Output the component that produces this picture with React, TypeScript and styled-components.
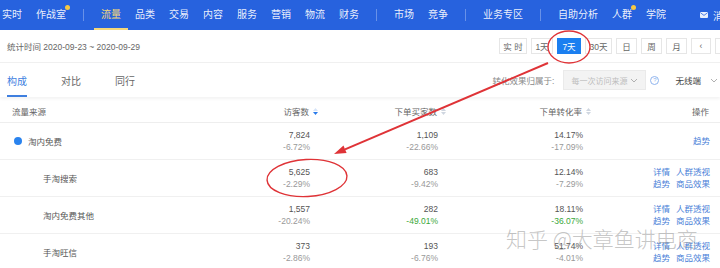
import React from "react";
import styled, { createGlobalStyle, css } from "styled-components";

const GlobalStyle = createGlobalStyle`
  html, body { margin: 0; padding: 0; background: #fff; }
  body { font-family: "Liberation Sans", "Noto Sans CJK SC", sans-serif; }
  * { box-sizing: border-box; }
`;

const Page = styled.div`
  position: relative;
  width: 720px;
  height: 268px;
  overflow: hidden;
  background: #fff;
`;

/* ---------- nav ---------- */
const NavBar = styled.div`
  height: 30px;
  background: #2762de;
  display: flex;
  align-items: center;
  gap: 14px;
  padding-left: 2px;
  white-space: nowrap;
`;

const NavItem = styled.div<{ $active?: boolean; $dot?: boolean }>`
  position: relative;
  font-size: 10px;
  line-height: 30px;
  height: 30px;
  color: rgba(255, 255, 255, 0.92);
  flex-shrink: 0;
  ${(p) =>
    p.$active &&
    css`
      color: #f4d77a;
      &::after {
        content: "";
        position: absolute;
        left: -7px;
        right: -7px;
        bottom: 0;
        height: 2px;
        background: #f4d77a;
      }
    `}
  ${(p) =>
    p.$dot &&
    css`
      &::before {
        content: "";
        position: absolute;
        right: -4px;
        top: 5px;
        width: 5px;
        height: 5px;
        border-radius: 50%;
        background: #f6c843;
      }
    `}
`;

const NavSep = styled.div`
  width: 1px;
  height: 12px;
  margin: 0 3px;
  background: rgba(255, 255, 255, 0.3);
  flex-shrink: 0;
`;

const NavMsg = styled.div`
  display: flex;
  align-items: center;
  gap: 5px;
  margin-left: 20px;
  font-size: 10px;
  color: rgba(255, 255, 255, 0.92);
  flex-shrink: 0;
`;

/* ---------- toolbar ---------- */
const Toolbar = styled.div`
  height: 33px;
  padding: 0 0 0 7px;
  display: flex;
  align-items: center;
  justify-content: space-between;
  border-bottom: 1px solid #f0f0f0;
`;

const StatText = styled.div`
  font-size: 8.5px;
  color: #666;
  white-space: nowrap;
`;

const BtnGroup = styled.div`
  display: flex;
  gap: 4px;
  margin-right: -15px;
`;

const RangeBtn = styled.div<{ $active?: boolean; $w: number }>`
  width: ${(p) => p.$w}px;
  height: 16px;
  display: flex;
  align-items: center;
  justify-content: center;
  font-size: 8.5px;
  border: 1px solid ${(p) => (p.$active ? "#1b7ff0" : "#e6e6e6")};
  background: ${(p) => (p.$active ? "#1b7ff0" : "#fff")};
  color: ${(p) => (p.$active ? "#fff" : "#666")};
  white-space: nowrap;
`;

/* ---------- tabs ---------- */
const TabsBar = styled.div`
  height: 34px;
  padding: 0 2px 0 7px;
  display: flex;
  align-items: stretch;
  justify-content: space-between;
  box-shadow: 0 2px 3px rgba(0, 0, 0, 0.05);
  position: relative;
`;

const Tabs = styled.div`
  display: flex;
  gap: 34px;
`;

const Tab = styled.div<{ $active?: boolean }>`
  position: relative;
  display: flex;
  align-items: center;
  font-size: 10px;
  padding-top: 1px;
  color: ${(p) => (p.$active ? "#3f7fdf" : "#666")};
  ${(p) =>
    p.$active &&
    css`
      &::after {
        content: "";
        position: absolute;
        left: 0;
        right: 0;
        bottom: 0;
        height: 2px;
        background: #3f7fdf;
      }
    `}
`;

const Filters = styled.div`
  display: flex;
  align-items: center;
`;

const FilterLabel = styled.div`
  font-size: 8.5px;
  color: #888;
  margin-right: 9px;
`;

const SelectBox = styled.div`
  width: 83px;
  height: 20px;
  background: #f3f3f3;
  border: 1px solid #eaeaea;
  display: flex;
  align-items: center;
  justify-content: space-between;
  padding: 0 7px 0 7px;
  font-size: 8px;
  color: #bdbdbd;
`;

const Help = styled.div`
  width: 9px;
  height: 9px;
  border-radius: 50%;
  border: 1px solid #8fb4ee;
  color: #8fb4ee;
  font-size: 6px;
  line-height: 7px;
  text-align: center;
  margin-left: 4px;
`;

const Platform = styled.div`
  display: flex;
  align-items: center;
  gap: 9px;
  margin-left: 16px;
  font-size: 8.5px;
  color: #444;
`;

/* ---------- table ---------- */
const Grid = css`
  display: grid;
  grid-template-columns: 238px 60px 128px 145px 127px;
  padding-left: 12px;
`;

const HeadRow = styled.div`
  ${Grid};
  height: 26px;
  padding-top: 3px;
  align-items: center;
  border-bottom: 1px solid #eeeeee;
  font-size: 8.5px;
  color: #666;
`;

const HeadCell = styled.div<{ $right?: boolean }>`
  display: flex;
  align-items: center;
  justify-content: ${(p) => (p.$right ? "flex-end" : "flex-start")};
  white-space: nowrap;
  padding-right: ${(p) => (p.$right ? "1px" : "0")};
`;

const Sorter = styled.span`
  display: inline-flex;
  flex-direction: column;
  margin-left: 4px;
  margin-right: -9px;
  gap: 1px;
`;

const Row = styled.div`
  ${Grid};
  height: 37px;
  align-items: center;
  border-bottom: 1px solid #f0f0f0;
  font-size: 8.5px;
`;

const SourceCell = styled.div<{ $level: number }>`
  display: flex;
  align-items: center;
  gap: 6px;
  padding-left: ${(p) => (p.$level === 1 ? "2px" : "31px")};
  color: #555;
`;

const Dot = styled.span`
  width: 8px;
  height: 8px;
  border-radius: 50%;
  background: #2a83ee;
`;

const NumCell = styled.div`
  display: flex;
  flex-direction: column;
  align-items: flex-end;
  line-height: 12px;
`;

const Main = styled.span`
  color: #555;
`;

const Sub = styled.span<{ $green?: boolean }>`
  color: ${(p) => (p.$green ? "#3aa83a" : "#999")};
`;

const Ops = styled.div`
  display: grid;
  grid-template-columns: auto auto;
  column-gap: 6px;
  row-gap: 0;
  justify-content: end;
  line-height: 12px;
  color: #4a7fd8;
  text-align: left;
`;

const Watermark = styled.div`
  position: absolute;
  left: 506px;
  top: 223px;
  font-size: 21px;
  font-family: "Noto Sans CJK SC", sans-serif;
  font-weight: 300;
  color: rgba(150, 150, 150, 0.55);
  white-space: nowrap;
  letter-spacing: 0;
  pointer-events: none;
`;

const Overlay = styled.svg`
  position: absolute;
  left: 0;
  top: 0;
  pointer-events: none;
`;

const Chevron = () => (
  <svg width="8" height="5" viewBox="0 0 8 5">
    <path d="M1 1 L4 4 L7 1" fill="none" stroke="#b0b0b0" strokeWidth="1" />
  </svg>
);

const SortIcon = ({ active }: { active?: boolean }) => (
  <Sorter>
    <svg width="5" height="3" viewBox="0 0 5 3">
      <path d="M0 3 L2.5 0 L5 3 Z" fill={active ? "#d6e4f8" : "#cfd6e0"} />
    </svg>
    <svg width="5" height="3" viewBox="0 0 5 3">
      <path d="M0 0 L2.5 3 L5 0 Z" fill={active ? "#2a7bea" : "#cfd6e0"} />
    </svg>
  </Sorter>
);

type RowData = {
  name: string;
  level: number;
  v: [string, string];
  b: [string, string, boolean?];
  r: [string, string, boolean?];
  full: boolean;
};

const rows: RowData[] = [
  { name: "淘内免费", level: 1, v: ["7,824", "-6.72%"], b: ["1,109", "-22.66%"], r: ["14.17%", "-17.09%"], full: false },
  { name: "手淘搜索", level: 2, v: ["5,625", "-2.29%"], b: ["683", "-9.42%"], r: ["12.14%", "-7.29%"], full: true },
  { name: "淘内免费其他", level: 2, v: ["1,557", "-20.24%"], b: ["282", "-49.01%", true], r: ["18.11%", "-36.07%", true], full: true },
  { name: "手淘旺信", level: 2, v: ["373", "-2.86%"], b: ["193", "-6.76%"], r: ["51.74%", "-4.01%"], full: true },
];

const ranges: [string, number][] = [
  ["实 时", 28],
  ["1天", 22],
  ["7天", 24],
  ["30天", 27],
  ["日", 21],
  ["周", 21],
  ["月", 21],
  ["‹", 20],
  ["›", 20],
];

export default function App() {
  return (
    <>
      <GlobalStyle />
      <Page>
        <NavBar>
          <NavItem>实时</NavItem>
          <NavItem $dot>作战室</NavItem>
          <NavSep />
          <NavItem $active>流量</NavItem>
          <NavItem>品类</NavItem>
          <NavItem>交易</NavItem>
          <NavItem>内容</NavItem>
          <NavItem>服务</NavItem>
          <NavItem>营销</NavItem>
          <NavItem>物流</NavItem>
          <NavItem>财务</NavItem>
          <NavSep />
          <NavItem>市场</NavItem>
          <NavItem>竞争</NavItem>
          <NavSep />
          <NavItem>业务专区</NavItem>
          <NavSep />
          <NavItem>自助分析</NavItem>
          <NavItem $dot>人群</NavItem>
          <NavItem>学院</NavItem>
          <NavMsg>
            <svg width="8" height="6" viewBox="0 0 8 6">
              <rect x="0" y="0" width="8" height="6" rx="1" fill="rgba(255,255,255,0.9)" />
              <path d="M0.5 0.8 L4 3.4 L7.5 0.8" fill="none" stroke="#2762de" strokeWidth="0.8" />
            </svg>
            消息
          </NavMsg>
        </NavBar>

        <Toolbar>
          <StatText>统计时间 2020-09-23 ~ 2020-09-29</StatText>
          <BtnGroup>
            {ranges.map(([t, w]) => (
              <RangeBtn key={t} $w={w} $active={t === "7天"}>
                {t}
              </RangeBtn>
            ))}
          </BtnGroup>
        </Toolbar>

        <TabsBar>
          <Tabs>
            <Tab $active>构成</Tab>
            <Tab>对比</Tab>
            <Tab>同行</Tab>
          </Tabs>
          <Filters>
            <FilterLabel>转化效果归属于:</FilterLabel>
            <SelectBox>
              <span>每一次访问来源</span>
              <Chevron />
            </SelectBox>
            <Help>?</Help>
            <Platform>
              <span>无线端</span>
              <Chevron />
            </Platform>
          </Filters>
        </TabsBar>

        <HeadRow>
          <HeadCell>流量来源</HeadCell>
          <HeadCell $right>
            访客数
            <SortIcon active />
          </HeadCell>
          <HeadCell $right>
            下单买家数
            <SortIcon />
          </HeadCell>
          <HeadCell $right>
            下单转化率
            <SortIcon />
          </HeadCell>
          <HeadCell $right>操作</HeadCell>
        </HeadRow>

        {rows.map((r) => (
          <Row key={r.name}>
            <SourceCell $level={r.level}>
              {r.level === 1 && <Dot />}
              <span>{r.name}</span>
            </SourceCell>
            <NumCell>
              <Main>{r.v[0]}</Main>
              <Sub>{r.v[1]}</Sub>
            </NumCell>
            <NumCell>
              <Main>{r.b[0]}</Main>
              <Sub $green={r.b[2]}>{r.b[1]}</Sub>
            </NumCell>
            <NumCell>
              <Main>{r.r[0]}</Main>
              <Sub $green={r.r[2]}>{r.r[1]}</Sub>
            </NumCell>
            {r.full ? (
              <Ops>
                <span>详情</span>
                <span>人群透视</span>
                <span>趋势</span>
                <span>商品效果</span>
              </Ops>
            ) : (
              <Ops>
                <span />
                <span>趋势</span>
              </Ops>
            )}
          </Row>
        ))}

        <Watermark>知乎 @大章鱼讲电商</Watermark>

        <Overlay width="720" height="268" viewBox="0 0 720 268">
          <ellipse cx="569" cy="47" rx="21" ry="16" fill="none" stroke="#df3337" strokeWidth="1.4" />
          <ellipse cx="307" cy="178" rx="40" ry="18.5" fill="none" stroke="#df3337" strokeWidth="1.4" transform="rotate(-3 307 178)" />
          <line x1="548" y1="63" x2="345" y2="149.3" stroke="#df3337" strokeWidth="2" />
          <polygon points="334,154 346.6,153 343.5,145.6" fill="#df3337" />
        </Overlay>
      </Page>
    </>
  );
}
